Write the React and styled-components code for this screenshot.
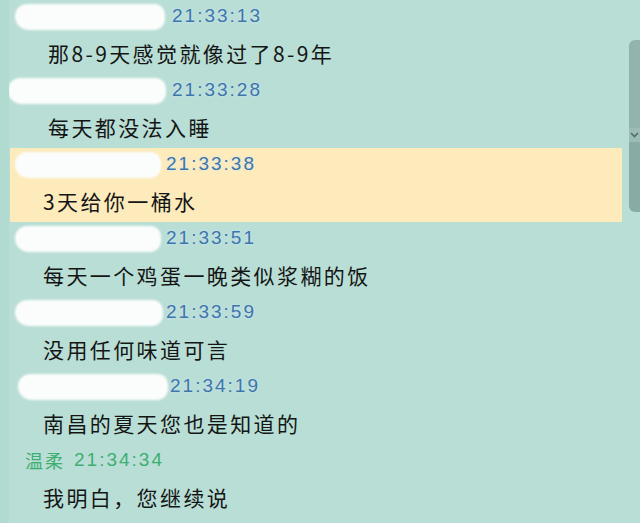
import styled, { createGlobalStyle } from 'styled-components'

const Global = createGlobalStyle`
    html, body {
        margin: 0;
        padding: 0;
        background: #b9ded6;
    }
    body {
        font-family: "Noto Sans CJK SC", "Noto Sans", sans-serif;
    }
`

const messages = [
    { time: '21:33:13', text: '那8-9天感觉就像过了8-9年', blob: 150, from: 5, indent: 38, timeAt: 172 },
    { time: '21:33:28', text: '每天都没法入睡', blob: 158, from: -2, indent: 38, timeAt: 172 },
    { time: '21:33:38', text: '3天给你一桶水', blob: 146, from: 5, indent: 33, timeAt: 166, active: true },
    { time: '21:33:51', text: '每天一个鸡蛋一晚类似浆糊的饭', blob: 146, from: 5, indent: 33, timeAt: 166 },
    { time: '21:33:59', text: '没用任何味道可言', blob: 148, from: 5, indent: 33, timeAt: 166 },
    { time: '21:34:19', text: '南昌的夏天您也是知道的', blob: 150, from: 8, indent: 33, timeAt: 170 },
    { time: '21:34:34', text: '我明白，您继续说', name: '温柔', indent: 33 },
]

const Window = styled.div`
    width: 640px;
    height: 523px;
    overflow: hidden;
    display: flex;
    background: #b9ded6;
    border-left: 9px solid #b1dad1;
    box-sizing: border-box;
`

const List = styled.div`
    flex: 1;
    display: flex;
    flex-direction: column;
    padding-left: 1px;
`

const Block = styled.div`
    height: 74px;
    display: flex;
    flex-direction: column;
    background: ${p => p.active ? '#fdebbc' : 'transparent'};
`

const Header = styled.div`
    height: 32px;
    display: flex;
    align-items: center;
    position: relative;
`

const Blob = styled.span`
    position: absolute;
    left: ${p => p.from}px;
    top: 4px;
    width: ${p => p.w}px;
    height: 26px;
    background: #fbfdfc;
    border-radius: 14px 12px 13px 16px;
    filter: blur(1.2px);
`

const Time = styled.span`
    margin-left: ${p => p.at - 10}px;
    font-family: "Liberation Sans", "Noto Sans", sans-serif;
    font-size: 19px;
    letter-spacing: 2px;
    color: #3d76ab;
    text-shadow: 0 0 3px #cfe6f5;
`

const Name = styled.span`
    margin-left: 15px;
    display: flex;
    gap: 9px;
    align-items: center;
    color: #3fae72;
    font-size: 18px;
    letter-spacing: 2px;

    b {
        font-weight: normal;
        font-family: "Liberation Sans", "Noto Sans", sans-serif;
        font-size: 19px;
        letter-spacing: 2px;
    }
`

const Text = styled.div`
    height: 42px;
    display: flex;
    align-items: center;
    padding-left: ${p => p.indent}px;
    font-size: 21px;
    letter-spacing: 2.4px;
    color: #141615;
`

const Track = styled.div`
    width: 18px;
    display: flex;
    flex-direction: column;
    align-items: flex-end;
    padding-top: 40px;
`

const Thumb = styled.div`
    width: 11px;
    height: ${p => p.h}px;
    background: ${p => p.dark ? '#89aba5' : '#93b4ae'};
    border-radius: ${p => p.dark ? '0 0 0 6px' : '6px 0 0 0'};
`

const Notch = styled.div`
    width: 11px;
    height: 14px;
    display: flex;
    justify-content: center;
    align-items: center;
    background: #9ebcb6;
`

export default function App() {
    return (
        <Window>
            <Global />
            <List>
                {messages.map((m, i) => (
                    <Block key={i} active={m.active}>
                        <Header>
                            {m.name ? (
                                <Name>{m.name}<b>{m.time}</b></Name>
                            ) : (
                                <>
                                    <Blob from={m.from} w={m.blob} />
                                    <Time at={m.timeAt}>{m.time}</Time>
                                </>
                            )}
                        </Header>
                        <Text indent={m.indent}>{m.text}</Text>
                    </Block>
                ))}
            </List>
            <Track>
                <Thumb h={88} />
                <Notch>
                    <svg width="9" height="6" viewBox="0 0 9 6">
                        <path d="M1 1 L4.5 4.5 L8 1" stroke="#4f6f6a" strokeWidth="1.6" fill="none" />
                    </svg>
                </Notch>
                <Thumb h={70} dark />
            </Track>
        </Window>
    )
}
